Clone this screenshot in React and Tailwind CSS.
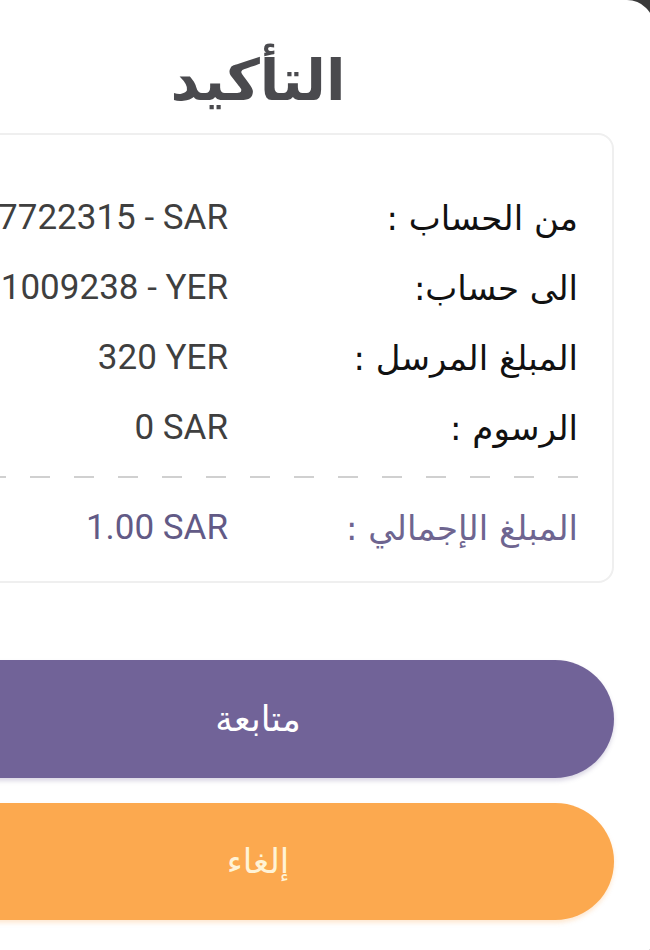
import React from 'react';

const rows = [
    { label: 'من الحساب :', value: '7722315 - SAR' },
    { label: 'الى حساب:', value: '1009238 - YER' },
    { label: 'المبلغ المرسل :', value: '320 YER' },
    { label: 'الرسوم :', value: '0 SAR' },
];

const arabic = { fontFamily: '"DejaVu Sans", "Noto Sans", sans-serif' };
const latin = { fontFamily: 'Roboto, "Noto Sans", sans-serif' };

const Row = ({ label, value, total }) => (
    <div className="flex h-[70px] items-center">
        <div className={`w-[350px] shrink-0 whitespace-nowrap text-[34px] tracking-[-0.5px] ${total ? 'text-[#6e6590]' : 'text-[#111111]'}`}
            style={arabic}>
            {label}
        </div>
        <div dir="ltr" className={`flex-1 whitespace-nowrap text-right text-[35px] ${total ? 'text-[#625a86]' : 'text-[#3f3f3f]'}`}
            style={latin}>
            {value}
        </div>
    </div>
);

export default function App() {
    return (
        <div className="h-[950px] w-[650px] overflow-hidden bg-[#3a3a3a]">
            <div dir="rtl" className="-ml-[138px] h-[962px] w-[792px] rounded-[27px] bg-white px-[40px] pt-[50px]">
                <h1 className="h-[60px] text-center text-[57px] font-bold leading-[60px] text-[#4a4a4e]" style={arabic}>
                    التأكيد
                </h1>

                <div className="mt-[23px] rounded-[16px] border-2 border-[#efefef] pt-[48px] pr-[34px] pl-[34px] pb-[18px]">
                    {rows.map((r) => <Row key={r.label} {...r} />)}
                    <div className="mt-[13px] h-[2px] w-full bg-[repeating-linear-gradient(to_left,#d0d0d0_0_20px,transparent_20px_44px)]" />
                    <div className="mt-[15px]">
                        <Row label="المبلغ الإجمالي :" value="1.00 SAR" total />
                    </div>
                </div>

                <button className="mt-[77px] flex h-[118px] w-full items-center justify-center rounded-full bg-[#716398] text-[35px] text-white shadow-[0_3px_4px_rgba(113,99,152,0.25)]"
                    style={arabic}>
                    متابعة
                </button>
                <button className="mt-[25px] flex h-[117px] w-full items-center justify-center rounded-full bg-[#fca94f] text-[34px] text-[#fff3d6] shadow-[0_3px_4px_rgba(252,169,79,0.25)]"
                    style={arabic}>
                    إلغاء
                </button>
            </div>
        </div>
    );
}
